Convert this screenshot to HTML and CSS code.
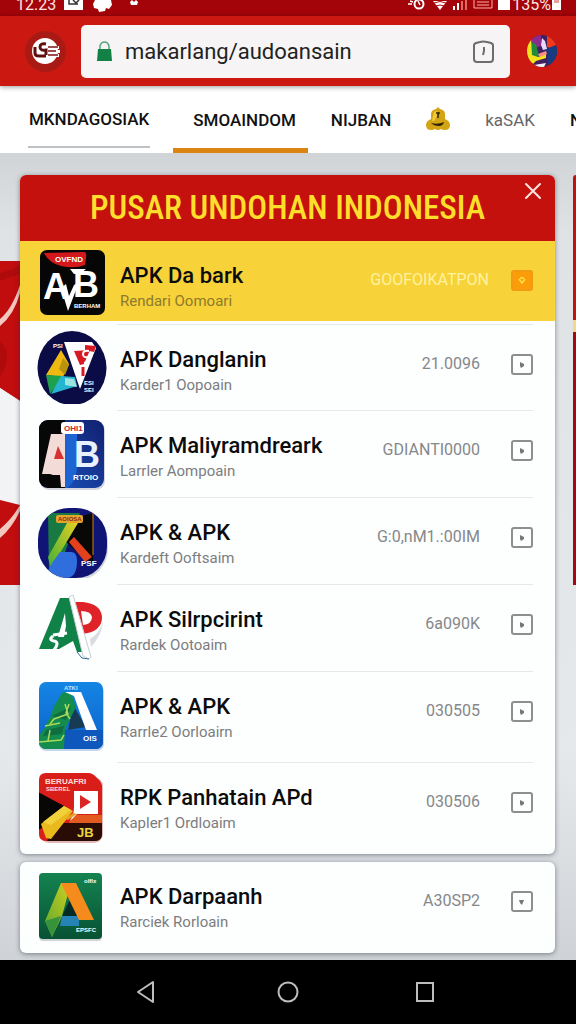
FILE: index.html
```html
<!DOCTYPE html>
<html lang="id">
<head>
<meta charset="UTF-8" />
<meta name="viewport" content="width=device-width, initial-scale=1" />
<title>Pusar Undohan Indonesia</title>
<link rel="stylesheet" href="styles.css">
</head>
<body>

<!-- Status bar -->
<div class="status">
  <span class="status-text">12.23</span>
  <svg class="status-left" width="76" height="16" viewBox="0 0 76 16" aria-hidden="true">
    <path fill="#fff" d="M0 0h19v10H0z"/>
    <path fill="none" stroke="#333" stroke-width="1.5" d="M5 0v4h9M9 0l3 3 3-3"/>
    <path fill="#fff" d="M31 0h16l1 5-3 4-3-1-1 3-6 1-1-3-4-1-1-4z"/>
    <path fill="#fff" d="M66 2l2-2 2 2 2-2 2 2-1 3h-6z"/>
  </svg>
  <svg class="status-right" width="102" height="16" viewBox="0 0 102 16" aria-hidden="true">
    <g fill="none" stroke="#fff">
      <circle cx="11" cy="4" r="4.500" stroke-width="2"/>
      <path stroke-width="1.500" d="M0 4h4M10 1l2 4M2 1l3 1"/>
      <path stroke="#ffb0a8" d="M66 0v8H84V0M69 5h12M69 2h12"/>
    </g>
    <path fill="#fff" d="M25 1h14l-7 9zM45 6h2v4h-2zM49 3h2v7h-2zM90 0h12v10H90z"/>
    <path stroke="#b50b0b" fill="none" d="M26 3q6-3 12 0M28 6q4-2 8 0"/>
    <path fill="#df6a63" d="M53 1h2v9h-2zM57 0h2v10h-2z"/>
  </svg>
  <span class="status-text">135%</span>
  <svg width="11" height="16" viewBox="0 0 11 16" aria-hidden="true"><path fill="#fff" d="M1 0h9v10H1z"/><path fill="#e6a19c" d="M3 0h5v3H3z"/></svg>
</div>

<!-- Browser bar -->
<header class="browser">
  <button class="site-logo" type="button" aria-label="Menu">
    <svg width="30" height="26" viewBox="0 0 30 26">
      <circle cx="14" cy="13" r="13" fill="#fff"/>
      <path fill="#fff" d="M15 8h13v3H15zM16 12h13v3H16zM15 16h13v3H15z"/>
      <path fill="none" stroke="#5e100f" stroke-width="3" d="M4 9v6q0 3 4 3h7M15 6q-6-1-6 3t6 3v5"/>
      <path stroke="#7d1512" stroke-width="1.500" d="M17 9h10M17 13h8M17 17h10"/>
    </svg>
  </button>
  <div class="address">
    <svg width="15" height="20" viewBox="0 0 15 20" aria-hidden="true">
      <path fill="none" stroke="#5aa47a" stroke-width="1.500" d="M3 10V5q1-4 4.500-4T12 5v5"/>
      <path fill="#138046" d="M1 8h13l1 12H0z"/>
    </svg>
    <input class="url" type="text" aria-label="Address" value="makarlang/audoansain">
    <button class="page-btn" type="button" aria-label="Pages">
      <svg width="21" height="23" viewBox="0 0 21 23">
        <path fill="none" stroke="#6d6d6d" stroke-width="2" d="M1 5q0-1 2-2l4-1q3-1 7 0l4 1q2 1 2 2v14q0 3-3 3H4q-3 0-3-3z"/>
        <path fill="none" stroke="#6d6d6d" stroke-width="2" d="M11 7v4l-1 4"/>
      </svg>
    </button>
  </div>
  <button class="avatar" type="button" aria-label="Profile">
    <svg width="32" height="34" viewBox="0 0 32 34">
      <defs><clipPath id="avatarClip"><ellipse cx="16" cy="17" rx="15" ry="16"/></clipPath></defs>
      <g clip-path="url(#avatarClip)">
        <path fill="#41205f" d="M0 0h32v34H0z"/>
        <path fill="#8d2a8d" d="M5 0h10v12L5 16z"/>
        <path fill="#218b3c" d="M4 8l6 2 3 12-7 4z"/>
        <path fill="#f3e21d" d="M0 6l5-2 1 17 6 2 8-3v4l-10 3-6 6-4-4z"/>
        <path fill="#f23a1c" d="M21 2l6-1 5 9-6 5-5-2z"/>
        <path fill="#163b80" d="M20 15l12-5v15l-10 6z"/>
        <path fill="#e8dcf8" d="M16 4l3 3 2 8-4 1-2-5z"/>
        <path fill="#ff8d82" d="M12 20l8-3 1 3-7 3z"/>
        <path fill="#f6eff5" d="M8 31l6-1 6-1-2 4H8z"/>
      </g>
    </svg>
  </button>
</header>

<!-- Tabs -->
<nav class="tabs">
  <a class="tab visited" href="#">MKNDAGOSIAK</a>
  <a class="tab active" href="#">SMOAINDOM</a>
  <a class="tab" href="#">NIJBAN</a>
  <a class="tab" href="#" aria-label="Bell">
    <svg width="24" height="25" viewBox="0 0 24 25">
      <path fill="#d3a414" d="M12 0l2 2q5 1 5 5v5q5 2 5 6 0 5-5 5-3 0-4-1-3 2-6 0-1 1-4 1-5 0-5-5 0-4 5-6V7q0-4 5-5z"/>
      <path fill="#f0cb35" d="M8 5l3-1v5l-3 5H6z"/>
      <path fill="none" stroke="#2d2204" stroke-width="1.500" d="M10 6h3l-1 2v3"/>
      <path fill="#2d2204" d="M5 16q7 2 13-1-1 4-5 4-5 0-8-3z"/>
    </svg>
  </a>
  <a class="tab light" href="#">kaSAK</a>
  <a class="tab" href="#">N</a>
</nav>

<main class="page">
  <svg class="flag" viewBox="0 0 20 324" preserveAspectRatio="none" aria-hidden="true">
    <path fill="#c20d0e" d="M0 0h20v140L0 127z"/>
    <path fill="#96090a" d="M0 12Q10 10 20 3v10Q10 16 0 20zM0 80q14 14 0 36z" opacity=".4"/>
    <path fill="#f1c7bf" d="M0 58Q12 48 20 24v8Q14 54 0 65z"/>
    <path fill="#f2f3f5" d="M0 127l20 13v104L0 239z"/>
    <path fill="#c20d0e" d="M0 239l20 5v80H0z"/>
    <path fill="#f1c7bf" d="M0 268Q12 258 20 244v6Q12 267 0 277z"/>
  </svg>

  <div class="cards">
    <section class="card">
      <div class="card-head">
        <h1>PUSAR UNDOHAN INDONESIA</h1>
        <button class="close" type="button" aria-label="Close">
          <svg width="16" height="16" viewBox="0 0 16 16"><path stroke="#fbe3e0" stroke-width="2" stroke-linecap="round" d="M1 1l14 14M15 1L1 15"/></svg>
        </button>
      </div>

      <ul class="list">
        <li class="row featured">
          <svg class="app-icon" viewBox="0 0 72 80" aria-hidden="true">
            <rect x="4" y="9" width="65" height="65" rx="7" fill="#060606"/>
            <path fill="#d3181c" d="M8 12l40-1q3 0 2 6l-1 7q-10 4-24 1-12-3-17-13z"/>
            <text class="logo-small" x="19" y="21" fill="#fff">OVFND</text>
            <text class="logo-big" x="7" y="58" fill="#fff">A</text>
            <text class="logo-big" x="37" y="56" fill="#fff">B</text>
            <path fill="#fff" d="M25 47l7 23 11-29-5 3-5 11-3-12z"/>
            <path fill="#fff" d="M34 28h16l-6 5h-6z"/>
            <text class="logo-tiny" x="38" y="67" fill="#fff">BERHAM</text>
          </svg>
          <div class="row-body">
            <div class="names"><h2>APK Da bark</h2><p>Rendari Oomoari</p></div>
            <span class="value">GOOFOIKATPON</span>
            <button class="get" type="button" aria-label="Download">
              <svg width="10" height="8" viewBox="0 0 10 8"><path fill="none" stroke="#ffe14a" stroke-width="1.500" d="M2 2l3 4 3-4M3 1h4"/></svg>
            </button>
          </div>
        </li>

        <li class="row">
          <svg class="app-icon" viewBox="0 0 72 80" aria-hidden="true">
            <ellipse cx="36" cy="44" rx="34.500" ry="37" fill="#0b0b46"/>
            <text class="logo-tiny" x="17" y="24" fill="#fff">PSI</text>
            <path fill="#efb912" d="M25 26l8 14-6 13-17-2z"/>
            <path fill="#b9930d" d="M27 34l6 7-4 10-6-6z"/>
            <path fill="#1fa04c" d="M10 51l18 1-7 9-7 9z"/>
            <path fill="#25b5d0" d="M25 52l14 1 2 9-26 8z"/>
            <path fill="#9be4e0" d="M29 54l9 1 3 8-12-2z"/>
            <path fill="#fff" d="M28 18h28l4 6-16 41z"/>
            <path fill="#d71924" d="M38 27l16-1-6 14-4 1zM49 21l11 1-2 6-9-2z"/>
            <path fill="none" stroke="#fff" stroke-width="2" d="M53 27q-6-1-6 3t5 3q1 5-4 6"/>
            <path stroke="#d71924" stroke-width="3" d="M47 43v9"/>
            <text class="logo-tiny" x="48" y="61" fill="#fff">ESI</text>
            <text class="logo-tiny" x="48" y="68" fill="#fff">SEI</text>
          </svg>
          <div class="row-body">
            <div class="names"><h2>APK Danglanin</h2><p>Karder1 Oopoain</p></div>
            <span class="value">21.0096</span>
            <button class="get" type="button" aria-label="Download"><svg width="6" height="6" viewBox="0 0 6 6"><path fill="#777" d="M1 0l4 2v2L2 6 1 4z"/></svg></button>
          </div>
        </li>

        <li class="row">
          <svg class="app-icon" viewBox="0 0 72 80" aria-hidden="true">
            <defs>
              <linearGradient id="blueTile" x1="0" y1="1" x2="1" y2="0"><stop offset="0" stop-color="#1c59c8"/><stop offset="1" stop-color="#101a66"/></linearGradient>
              <clipPath id="tileClip"><rect x="3" y="9" width="65" height="68" rx="9"/></clipPath>
            </defs>
            <rect x="4" y="11" width="65" height="68" rx="9" fill="#d3d6de"/>
            <g clip-path="url(#tileClip)">
              <path fill="url(#blueTile)" d="M0 0h72v80H0z"/>
              <path fill="#070708" d="M0 0h29v80H0z"/>
              <path fill="#f3dcd8" d="M15 23h15v53h-5l-1-12h-7l-3-1-3 0-5 0z"/>
              <path fill="#d93030" d="M22 35l6 13H18z"/>
              <path fill="#1d63d2" d="M29 22h12v36q-2 16-12 20z"/>
              <text class="logo-big" x="38" y="56" fill="#e9f1ff">B</text>
              <rect x="25" y="11" width="23" height="12" rx="3" fill="#fff"/>
            </g>
            <text class="logo-small" x="28" y="20" fill="#c6262c">OHI1</text>
            <text class="logo-small" x="37" y="69" fill="#fff">RTOIO</text>
          </svg>
          <div class="row-body">
            <div class="names"><h2>APK Maliyramdreark</h2><p>Larrler Aompoain</p></div>
            <span class="value">GDIANTI0000</span>
            <button class="get" type="button" aria-label="Download"><svg width="6" height="6" viewBox="0 0 6 6"><path fill="#777" d="M1 0l4 2v2L2 6 1 4z"/></svg></button>
          </div>
        </li>

        <li class="row">
          <svg class="app-icon" viewBox="0 0 72 80" aria-hidden="true">
            <defs>
              <linearGradient id="limeStrip" x1="0" y1="1" x2="1" y2="0"><stop offset="0" stop-color="#3dae37"/><stop offset="1" stop-color="#e8d022"/></linearGradient>
              <clipPath id="roundClip"><rect x="2" y="10" width="69" height="70" rx="31"/></clipPath>
            </defs>
            <rect x="4" y="12" width="68" height="70" rx="31" fill="#d5d6dc"/>
            <g clip-path="url(#roundClip)">
              <path fill="#101475" d="M0 0h72v82H0z"/>
              <path fill="#187a42" d="M12 15h32L26 62 13 74z"/>
              <path fill="#080808" d="M39 20l18-5v50L46 59 29 43z"/>
              <path fill="none" stroke="#c4821b" d="M57 15v42"/>
              <path fill="url(#limeStrip)" d="M31 25h11L24 55q-6 8-9 17l-3-13z"/>
              <path fill="#2f6edc" d="M24 54h11q6 0 6 9 0 17-11 17L10 76q6-12 14-22z"/>
              <path fill="#e3401d" d="M33 44l5-5 18 20-7 5z"/>
              <rect x="20" y="17" width="27" height="8" rx="2" fill="#e3a52b"/>
            </g>
            <text class="logo-tiny" x="22" y="23" fill="#8c2b18">AOIOSA</text>
            <text class="logo-small" x="45" y="68" fill="#fff">PSF</text>
          </svg>
          <div class="row-body">
            <div class="names"><h2>APK &amp; APK</h2><p>Kardeft Ooftsaim</p></div>
            <span class="value">G:0,nM1.:00IM</span>
            <button class="get" type="button" aria-label="Download"><svg width="6" height="6" viewBox="0 0 6 6"><path fill="#777" d="M1 0l4 2v2L2 6 1 4z"/></svg></button>
          </div>
        </li>

        <li class="row">
          <svg class="app-icon" viewBox="0 0 72 80" aria-hidden="true">
            <path fill="#d9dce0" d="M54 54q10-6 13-18-1 14-12 26z"/>
            <path fill="#df2228" fill-rule="evenodd" d="M35 17h12q18 2 19 15 0 15-20 17l-11-9zM45 26l2 14q9-1 9-8-1-6-11-6z"/>
            <path fill="#118247" d="M24 13h11l17 54H41l-4-11-14 8H3z"/>
            <path fill="#fff" d="M29 28l-7 24h6l2-11z"/>
            <path fill="none" stroke="#fff" stroke-width="3" d="M17 51q-5 4 1 5t0 9M17 50l14-2"/>
            <path fill="#fff" stroke="#c9d0d6" d="M33 12l4-2 18 62-2 2-6-3z"/>
            <path fill="none" stroke="#2a6c97" d="M41 67l5 6 7 1"/>
          </svg>
          <div class="row-body">
            <div class="names"><h2>APK Silrpcirint</h2><p>Rardek Ootoaim</p></div>
            <span class="value">6a090K</span>
            <button class="get" type="button" aria-label="Download"><svg width="6" height="6" viewBox="0 0 6 6"><path fill="#777" d="M1 0l4 2v2L2 6 1 4z"/></svg></button>
          </div>
        </li>

        <li class="row tall">
          <svg class="app-icon" viewBox="0 0 72 80" aria-hidden="true">
            <defs>
              <linearGradient id="skyTile" x1="0" y1="0" x2="0" y2="1"><stop offset="0" stop-color="#168be8"/><stop offset="1" stop-color="#0c5fc9"/></linearGradient>
              <clipPath id="skyClip"><rect x="3" y="10" width="64" height="67" rx="7"/></clipPath>
            </defs>
            <rect x="3" y="12" width="65" height="67" rx="7" fill="#c5d6ea"/>
            <g clip-path="url(#skyClip)">
              <path fill="url(#skyTile)" d="M0 0h72v80H0z"/>
              <path fill="#0d57bd" d="M29 58h38v20H24z"/>
              <path fill="#173a55" d="M37 33l13 22-18 3z"/>
              <path fill="#148c4e" d="M27 20l8 1 5 14-11 22-1 20H0V68l10-14q0-4 4-8l4-12q4-5 6-10z"/>
              <path fill="#0e6e40" d="M28 38l7-3-5 13-14-4 8-4zM10 58l18-4-2 8-19 2z"/>
              <path fill="none" stroke="#a8d95a" stroke-width="1.500" d="M29 32l3 10-14 5-4 5M33 32l-3 9 4 6M9 54l15-3M3 70l22-2 3-5M14 58l-2 11"/>
            </g>
            <path fill="#fff" d="M29 20h16l16 38H50L38 24z"/>
            <text class="logo-tiny" x="28" y="18" fill="#bde4ff">ATKI</text>
            <text class="logo-small" x="47" y="69" fill="#fff">OIS</text>
          </svg>
          <div class="row-body">
            <div class="names"><h2>APK &amp; APK</h2><p>Rarrle2 Oorloairn</p></div>
            <span class="value">030505</span>
            <button class="get" type="button" aria-label="Download"><svg width="6" height="6" viewBox="0 0 6 6"><path fill="#777" d="M1 0l4 2v2L2 6 1 4z"/></svg></button>
          </div>
        </li>

        <li class="row tall">
          <svg class="app-icon" viewBox="0 0 72 80" aria-hidden="true">
            <defs>
              <clipPath id="redClip"><path d="M10 10h42q5 0 9 5 5 4 5 9v47q0 7-7 7H10q-7 0-7-7V17q0-7 7-7z"/></clipPath>
            </defs>
            <rect x="4" y="14" width="63" height="66" rx="9" fill="#dfb9b8"/>
            <g clip-path="url(#redClip)">
              <path fill="#d91d18" d="M0 0h72v82H0z"/>
              <path fill="#080706" d="M0 28l30 16-18 18-12 6z"/>
              <path fill="#e35a20" d="M36 52h31v8H33z"/>
              <path fill="#290c06" d="M20 60h47v20H10z"/>
              <path fill="#e9b91e" d="M28 43l9 5-22 28-5-1-5-14z"/>
              <path fill="#f2d03c" d="M28 43l7 4-20 15-8-3z"/>
              <path fill="#fff" d="M38 28h24v23H41l-7 7q4-7 4-14z"/>
              <path fill="#e9a026" d="M41 51l-9 6-3-1 8-6z"/>
            </g>
            <path fill="#db2724" d="M44 32l11 7-11 7z"/>
            <text class="logo-small" x="9" y="21" fill="#ffdcd6">BERUAFRI</text>
            <text class="logo-tiny" x="10" y="28" fill="#ffdcd6">SBEREL</text>
            <text class="logo-mid" x="41" y="74" fill="#ecd343">JB</text>
          </svg>
          <div class="row-body">
            <div class="names"><h2>RPK Panhatain APd</h2><p>Kapler1 Ordloaim</p></div>
            <span class="value">030506</span>
            <button class="get" type="button" aria-label="Download"><svg width="6" height="6" viewBox="0 0 6 6"><path fill="#777" d="M1 0l4 2v2L2 6 1 4z"/></svg></button>
          </div>
        </li>
      </ul>
    </section>

    <section class="card">
      <ul class="list">
        <li class="row tall">
          <svg class="app-icon" viewBox="0 0 72 80" aria-hidden="true">
            <defs>
              <linearGradient id="greenTile" x1="0" y1="0" x2="0" y2="1"><stop offset="0" stop-color="#148350"/><stop offset="1" stop-color="#075234"/></linearGradient>
              <linearGradient id="leafStrip" x1="1" y1="0" x2="0" y2="1"><stop offset="0" stop-color="#d1cf21"/><stop offset="1" stop-color="#5aa82d"/></linearGradient>
            </defs>
            <rect x="3" y="13" width="63" height="66" rx="4" fill="#cfd3d1"/>
            <rect x="3" y="11" width="63" height="66" rx="4" fill="url(#greenTile)"/>
            <path fill="#062b24" d="M34 38l8 16H26z"/>
            <path fill="#2584b5" d="M26 54h17v10H24z"/>
            <path fill="url(#leafStrip)" d="M25 21h10L26 54 16 75 9 59z"/>
            <path fill="#37923c" d="M9 59l16-5-9 21z"/>
            <path fill="#f58a1d" d="M25 21h15l18 37H43z"/>
            <text class="logo-tiny" x="48" y="21" fill="#fff">olflx</text>
            <text class="logo-tiny" x="40" y="70" fill="#fff">EPSFC</text>
          </svg>
          <div class="row-body">
            <div class="names"><h2>APK Darpaanh</h2><p>Rarciek Rorloain</p></div>
            <span class="value">A30SP2</span>
            <button class="get" type="button" aria-label="Download"><svg width="6" height="6" viewBox="0 0 6 6"><path fill="#777" d="M0 1h5L3 6 1 4z"/></svg></button>
          </div>
        </li>
      </ul>
    </section>
  </div>

  <div class="next-card"></div>
</main>

<!-- Android navigation -->
<nav class="nav">
  <button type="button" aria-label="Back"><svg width="24" height="24" viewBox="0 0 24 24"><path fill="none" stroke="#bdbdbd" stroke-width="2" stroke-linejoin="round" d="M16 2v20L1 12z"/></svg></button>
  <button type="button" aria-label="Home"><svg width="22" height="24" viewBox="0 0 22 24"><circle cx="11" cy="12" r="9.500" fill="none" stroke="#bdbdbd" stroke-width="2"/></svg></button>
  <button type="button" aria-label="Recent"><svg width="24" height="24" viewBox="0 0 24 24"><path fill="none" stroke="#bdbdbd" stroke-width="2" d="M2 3h16v18H2z"/></svg></button>
</nav>

</body>
</html>
```
FILE: styles.css
```css
* {
  box-sizing: border-box;
}
body {
  margin: 0;
  min-height: 100vh;
  display: flex;
  flex-direction: column;
  font-family: Roboto, "Liberation Sans", sans-serif;
  color: #0c0c0c;
  background: #dfe2e5;
  overflow-x: hidden;
}
button {
  padding: 0;
  border: none;
  background: none;
  cursor: pointer;
}
svg {
  display: block;
  flex: none;
}

/* status bar */
.status {
  height: 16px;
  display: flex;
  align-items: flex-start;
  padding: 0 14px 0 16px;
  background: #a30409;
  color: #fde4e1;
  overflow: hidden;
}
.status-text {
  font-size: 16px;
  line-height: 9px;
}
.status-left {
  margin-left: 8px;
}
.status-right {
  margin-left: auto;
  margin-right: 2px;
}

/* browser bar */
.browser {
  height: 70px;
  display: flex;
  align-items: center;
  padding: 0 18px 0 25px;
  background: #cb1912;
  box-shadow: 0 1px 5px rgba(0, 0, 0, 0.4);
  position: relative;
}
.site-logo {
  width: 41px;
  height: 41px;
  display: grid;
  place-items: center;
  border-radius: 50%;
  background: #aa1a15;
}
.address {
  flex: 1;
  min-width: 0;
  height: 53px;
  margin: 0 16px 0 15px;
  padding: 0 16px;
  display: flex;
  align-items: center;
  gap: 13px;
  border-radius: 5px;
  background: #f6f4f4;
}
.url {
  flex: 1;
  min-width: 0;
  padding: 2px 0 0;
  border: none;
  outline: none;
  background: none;
  font: 400 22px/30px Roboto, "Liberation Sans", sans-serif;
  color: #222;
}

/* tabs */
.tabs {
  height: 67px;
  display: flex;
  padding-left: 28px;
  background: #fff;
  overflow: hidden;
  white-space: nowrap;
}
.tab {
  flex: none;
  display: flex;
  align-items: center;
  margin-right: 35px;
  color: #111;
  font-size: 17px;
  font-weight: 500;
  text-decoration: none;
}
.tab.visited {
  height: 62px;
  padding: 5px 1px 0;
  margin-right: 23px;
  border-bottom: 2px solid #bfc2c5;
}
.tab.active {
  padding: 5px 12px 0 20px;
  margin-right: 23px;
  border-bottom: 5px solid #dc8412;
}
.tab.light {
  color: #666;
  font-weight: 400;
}

/* page */
.page {
  flex: 1;
  display: grid;
  grid-template-columns: 20px 1fr 18px 3px;
  padding: 22px 0 7px;
  background: linear-gradient(#d0d4d7, #e0e3e6 80px, #e6e9eb 600px, #cfd3d7);
}
.flag {
  width: 20px;
  height: 324px;
  margin-top: 86px;
}
.cards {
  display: flex;
  flex-direction: column;
  gap: 8px;
}
.card {
  border-radius: 6px;
  background: #fdfefe;
  box-shadow: 0 1px 5px rgba(30, 40, 50, 0.5);
  overflow: hidden;
}
.next-card {
  grid-column: 4;
  height: 410px;
  border-radius: 5px 0 0 0;
  background: linear-gradient(#c6100d 145px, #f6d789 145px, #f6d789 157px, #a90613 157px);
}

.card-head {
  height: 66px;
  display: grid;
  grid-template-columns: 44px 1fr 44px;
  align-items: center;
  background: #c5110d;
}
h1 {
  grid-column: 2;
  margin: 0;
  text-align: center;
  white-space: nowrap;
  font-family: "Roboto Condensed", "Liberation Sans Narrow", Roboto, sans-serif;
  font-size: 33px;
  line-height: 44px;
  font-weight: 500;
  color: #fddf2b;
}
.close {
  align-self: start;
  justify-self: center;
  padding: 8px 0;
}

/* app list */
.list {
  margin: 0;
  padding: 0;
  list-style: none;
}
.row {
  height: 87px;
  display: flex;
  gap: 9px;
  padding: 0 22px 0 16px;
}
.row.tall {
  height: 91px;
}
.row.featured {
  height: 80px;
  margin-bottom: 3px;
  background: #f7d239;
}
.app-icon {
  width: 72px;
  height: 80px;
}
.row-body {
  flex: 1;
  min-width: 0;
  display: flex;
  align-items: flex-start;
  padding: 21px 0 0 3px;
  border-bottom: 1px solid #e6e8e9;
}
.featured .row-body,
.row:last-child .row-body {
  border-bottom: none;
}
.featured + .row .row-body {
  border-top: 1px solid #e6e8e9;
}
.names {
  flex: 1;
  white-space: nowrap;
}
h2 {
  margin: 0;
  font-size: 22px;
  line-height: 28px;
  font-weight: 500;
}
.names p {
  margin: 0;
  font-size: 15px;
  line-height: 22px;
  color: #7b7d7e;
}
.value {
  margin: 7px 31px 0 0;
  font-size: 16px;
  line-height: 22px;
  color: #85888a;
}
.get {
  width: 22px;
  height: 21px;
  margin-top: 8px;
  display: grid;
  place-items: center;
  border: 2px solid #8c8e90;
  border-radius: 3px;
}
.featured .names p {
  color: #8e7a2d;
}
.featured .value {
  margin-right: 22px;
  color: #fdf3a0;
}
.featured .get {
  border-color: #f29a12;
  background: #fb9d09;
}

/* lettering inside the app icons */
.logo-big {
  font: 700 36px "Liberation Sans", sans-serif;
}
.logo-mid {
  font: 700 13px "Liberation Sans", sans-serif;
}
.logo-small {
  font: 700 8px "Liberation Sans", sans-serif;
}
.logo-tiny {
  font: 700 6px "Liberation Sans", sans-serif;
}

/* bottom navigation */
.nav {
  height: 64px;
  display: flex;
  justify-content: center;
  align-items: center;
  gap: 116px;
  background: #000;
}
```
